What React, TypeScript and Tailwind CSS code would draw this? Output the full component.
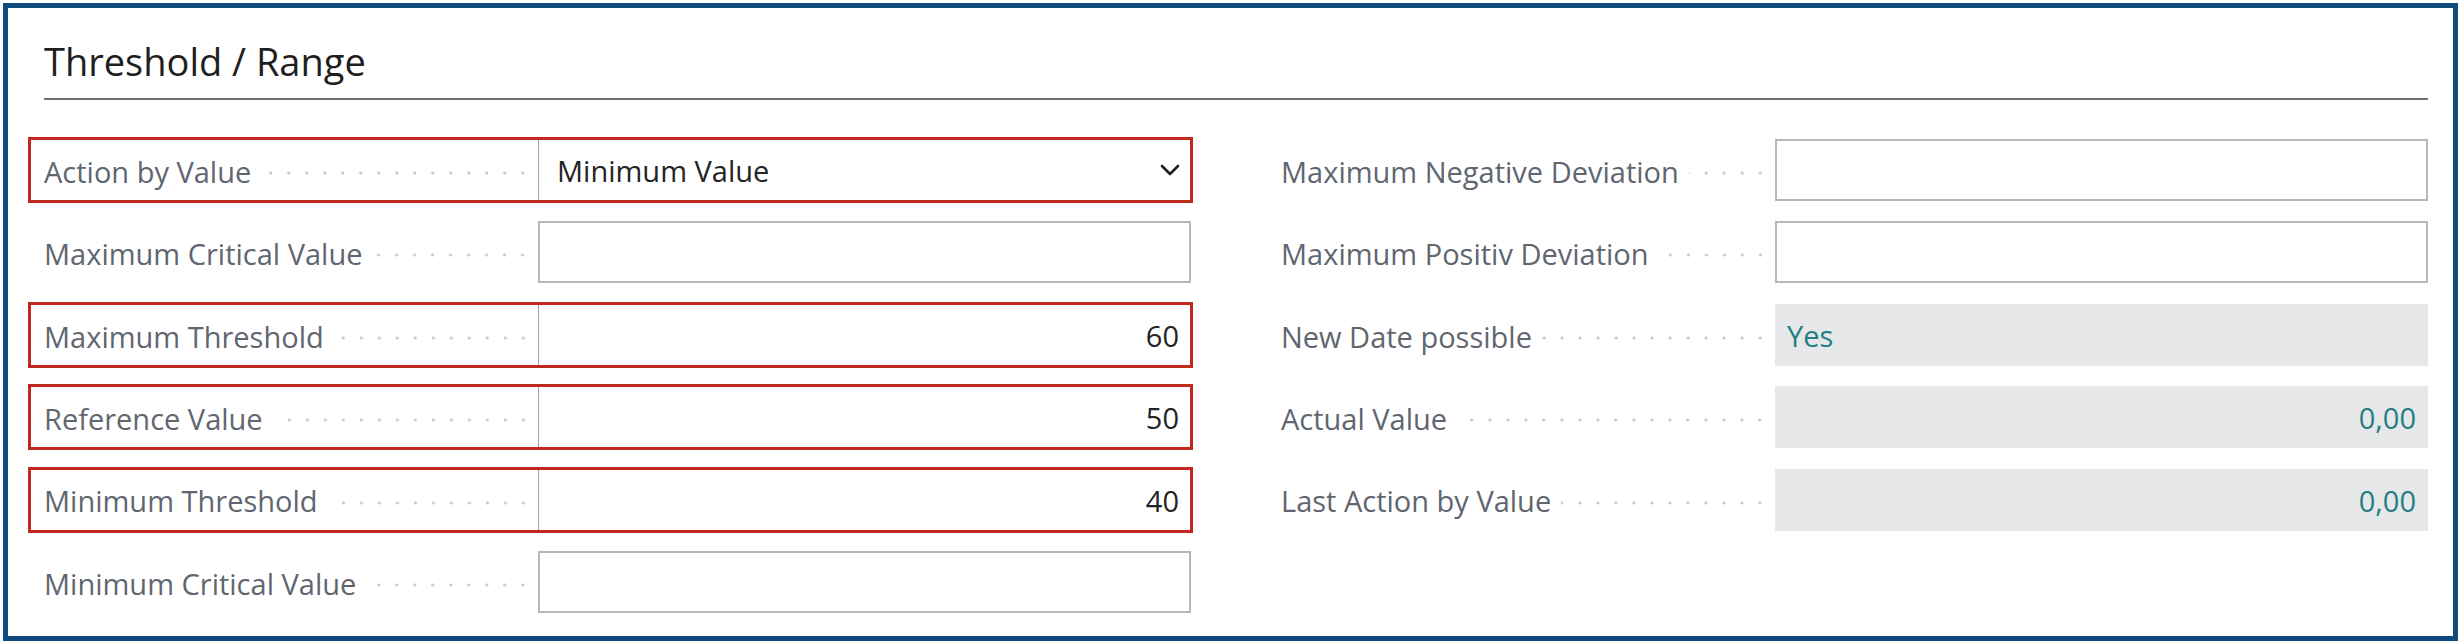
import React from 'react';

type FieldKind = 'select' | 'input' | 'readonly';

interface Field {
  label: string;
  kind: FieldKind;
  value?: string;
  alignRight?: boolean;
  highlight?: boolean;
}

const leftFields: Field[] = [
  { label: 'Action by Value', kind: 'select', value: 'Minimum Value', highlight: true },
  { label: 'Maximum Critical Value', kind: 'input' },
  { label: 'Maximum Threshold', kind: 'input', value: '60', alignRight: true, highlight: true },
  { label: 'Reference Value', kind: 'input', value: '50', alignRight: true, highlight: true },
  { label: 'Minimum Threshold', kind: 'input', value: '40', alignRight: true, highlight: true },
  { label: 'Minimum Critical Value', kind: 'input' },
];

const rightFields: Field[] = [
  { label: 'Maximum Negative Deviation', kind: 'input' },
  { label: 'Maximum Positiv Deviation', kind: 'input' },
  { label: 'New Date possible', kind: 'readonly', value: 'Yes' },
  { label: 'Actual Value', kind: 'readonly', value: '0,00', alignRight: true },
  { label: 'Last Action by Value', kind: 'readonly', value: '0,00', alignRight: true },
];

function FieldValue({ field }: { field: Field }) {
  // highlighted rows: the red frame sits on top of the box, only the divider shows
  const boxBorder = field.highlight ? 'border-l border-[#a3a3a3]' : 'border-2 border-[#b7b7b7]';

  if (field.kind === 'select') {
    return (
      <div className={`flex w-[653px] items-center justify-between bg-white pl-[18px] pr-[11px] ${boxBorder}`}>
        <span className="pt-[2px] text-[#242424]">{field.value}</span>
        <svg viewBox="0 0 20 12" className="h-[12px] w-[20px]" fill="none">
          <path d="M2 2 L10 10 L18 2" stroke="#1f1f1f" strokeWidth="2.6" strokeLinecap="round" strokeLinejoin="round" />
        </svg>
      </div>
    );
  }

  if (field.kind === 'readonly') {
    return (
      <div
        className={`flex w-[653px] items-center bg-[#e6e7e9] px-[12px] pt-[2px] text-[#237f84] ${
          field.alignRight ? 'justify-end' : 'justify-start'
        }`}
      >
        {field.value}
      </div>
    );
  }

  return (
    <div
      className={`flex w-[653px] items-center bg-white px-[12px] pt-[2px] text-[#242424] ${boxBorder} ${
        field.alignRight ? 'justify-end' : 'justify-start'
      }`}
    >
      {field.value}
    </div>
  );
}

function FieldRow({ field }: { field: Field }) {
  return (
    <div className="relative flex h-[62px]">
      <div className="flex w-[494px] items-center">
        <span className="whitespace-nowrap pt-[3px] text-[#5f6670]">{field.label}</span>
        <span className="ml-[10px] mr-[6px] mt-[6px] h-[4px] flex-1 bg-[image:radial-gradient(circle,#c6c8cb_1.3px,transparent_1.8px)] bg-[length:18px_4px] bg-right bg-repeat-x" />
      </div>
      <FieldValue field={field} />
      {field.highlight && (
        <div className="pointer-events-none absolute -bottom-[2px] -left-[16px] -right-[2px] -top-[2px] border-[3px] border-[#c3281f]" />
      )}
    </div>
  );
}

export default function App() {
  return (
    <div className="h-[644px] w-[2461px] bg-white p-[3px] font-['Open_Sans',sans-serif] text-[29px]">
      <div className="h-full border-[5px] border-[#0e4a7c] pl-[36px] pr-[25px] pt-[29px]">
        <h2 className="h-[48px] text-[38px] font-[500] leading-[48px] text-[#1f1f1f]">Threshold / Range</h2>
        <div className="mt-[13px] h-[2px] bg-[#6f6f6f]" />

        <div className="mt-[39px] grid grid-cols-2 gap-x-[90px]">
          <div className="flex flex-col gap-y-[20.4px]">
            {leftFields.map((f) => (
              <FieldRow key={f.label} field={f} />
            ))}
          </div>
          <div className="flex flex-col gap-y-[20.4px]">
            {rightFields.map((f) => (
              <FieldRow key={f.label} field={f} />
            ))}
          </div>
        </div>
      </div>
    </div>
  );
}
